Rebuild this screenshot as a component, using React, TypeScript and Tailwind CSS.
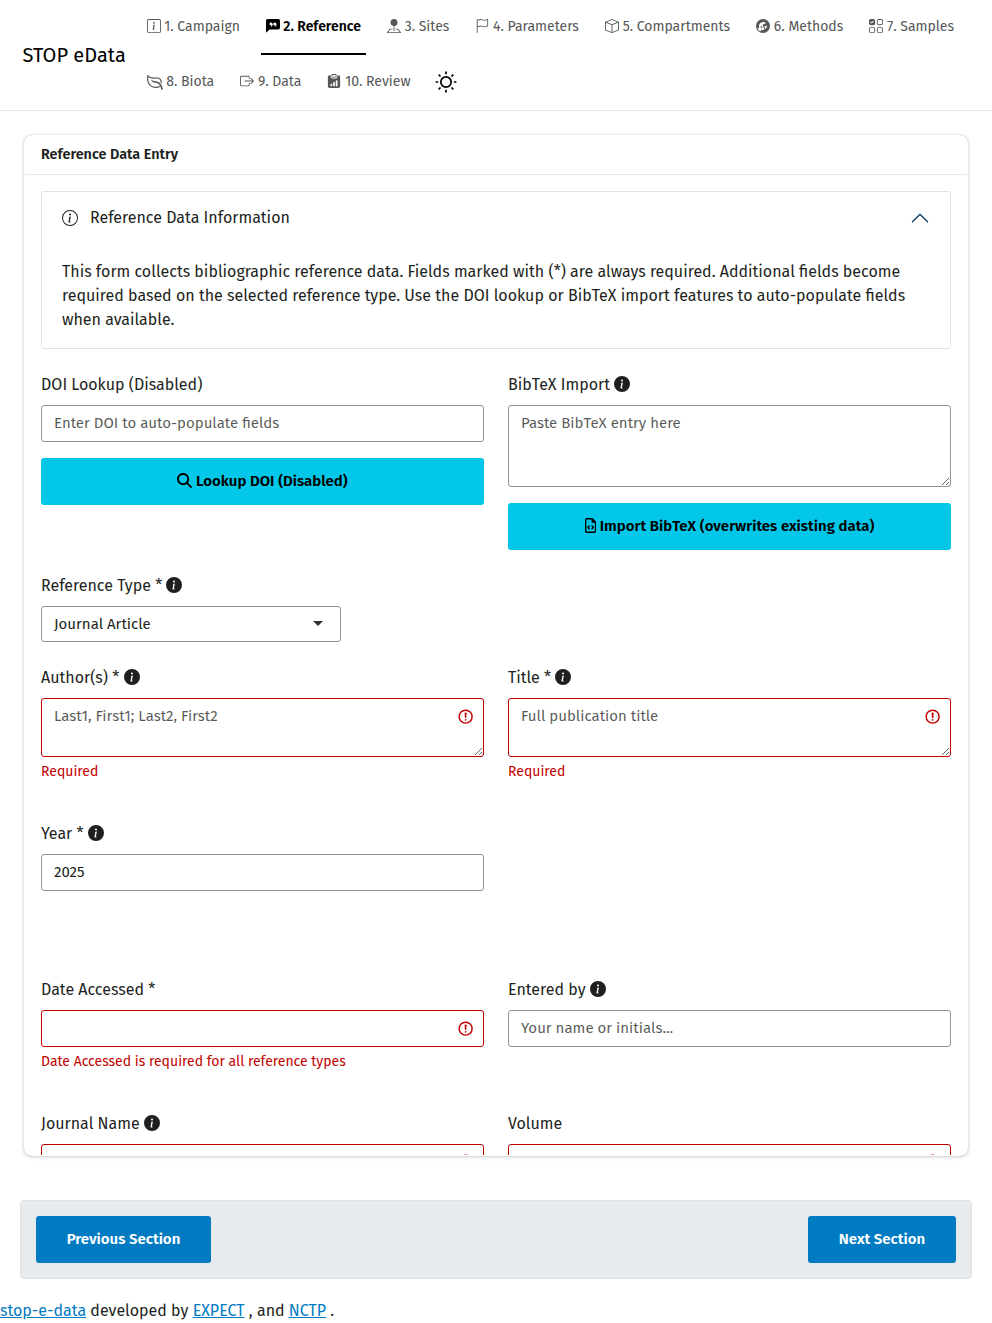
import type { InputHTMLAttributes, ReactNode } from "react";
import {
  BsBox,
  BsBoxArrowRight,
  BsChatLeftQuoteFill,
  BsClipboardDataFill,
  BsFlag,
  BsInfoCircle,
  BsInfoCircleFill,
  BsInfoSquare,
  BsPinMapFill,
  BsUiChecksGrid,
  BsWrenchAdjustableCircleFill,
} from "react-icons/bs";
import { FaMagnifyingGlass, FaRegFileCode } from "react-icons/fa6";

function LeafIcon({ className }: { className?: string }) {
  return (
    <svg viewBox="0 0 16 16" fill="none" stroke="currentColor" strokeWidth="1.2" className={className}>
      <path strokeLinejoin="round" d="M14.2 9.2C14.6 6.2 13 3.7 9 4 5.5 4.3 2.3 3.9.9 1.6.3 5 .8 9.4 3.8 11.9 6.5 14 11 13.8 12.8 12.2" />
      <path
        stroke="none"
        fill="currentColor"
        d="M4 5.5C6 7.4 9 7 11 7.7 14 8.8 15.400 12 15.900 15.200L14.400 15.900C13.900 13 12.800 10.300 10.800 9.400 8.500 8.500 4.800 9.200 4 5.500Z"
      />
    </svg>
  );
}

function SunIcon() {
  return (
    <svg viewBox="0 0 22 22" fill="none" stroke="currentColor" strokeWidth="1.7" className="size-[22px]">
      <circle cx="11" cy="11" r="5.2" />
      <path d="M11 .6v2.6M11 18.8v2.6M.6 11h2.6M18.8 11h2.6M3.7 3.7l1.8 1.8M16.5 16.5l1.8 1.8M3.7 18.3l1.8-1.8M16.5 5.5l1.8-1.8" />
    </svg>
  );
}

function InvalidIcon({ className }: { className: string }) {
  return (
    <svg
      viewBox="0 0 12 12"
      fill="none"
      stroke="#c10000"
      className={`pointer-events-none absolute right-[9.8px] size-[17.25px] ${className}`}
    >
      <circle cx="6" cy="6" r="4.5" />
      <path strokeLinejoin="round" d="M5.8 3.6h.4L6 6.5z" />
      <circle cx="6" cy="8.2" r=".6" fill="#c10000" stroke="none" />
    </svg>
  );
}

const icon = "inline-block size-[14px] align-[-2px]";

function NavItem({ glyph, children, active }: { glyph: ReactNode; children: ReactNode; active?: boolean }) {
  return (
    <li
      className={
        active
          ? "h-[55px] whitespace-nowrap border-b-2 border-black px-[5px] pt-4 font-semibold text-black"
          : "h-[55px] whitespace-nowrap border-b-2 border-transparent px-[5px] pt-4 text-[#565758]"
      }
    >
      {glyph} {children}
    </li>
  );
}

function Label({ children, info }: { children: ReactNode; info?: boolean }) {
  return (
    <label className="mb-2 block h-[25px] pt-px">
      {children}
      {info && (
        <>
          {" "}
          <BsInfoCircleFill className="inline-block size-4 align-[-2px]" />
        </>
      )}
    </label>
  );
}

const field =
  "block w-full rounded-[3px] border px-3 text-[15px] leading-[22.5px] outline-none placeholder:text-[#1d1f21]/75";
const normal = "border-[#8d959e]";
const invalid = "border-[#c10000]";

function Input({
  bad,
  iconClass = "top-[9.5px]",
  ...rest
}: InputHTMLAttributes<HTMLInputElement> & { bad?: boolean; iconClass?: string }) {
  return (
    <div className="relative">
      <input className={`${field} h-[37px] pb-[7px] pt-[5px] ${bad ? invalid : normal}`} {...rest} />
      {bad && <InvalidIcon className={iconClass} />}
    </div>
  );
}

function Area({ size, bad, placeholder }: { size: string; bad?: boolean; placeholder: string }) {
  return (
    <div className="relative">
      <textarea className={`${field} resize-y py-[6px] ${size} ${bad ? invalid : normal}`} placeholder={placeholder} />
      {bad && <InvalidIcon className="top-[9.9px]" />}
    </div>
  );
}

function Feedback({ children }: { children: ReactNode }) {
  return <div className="mt-1 text-[14px] leading-[21px] text-[#c10000]">{children}</div>;
}

const cyan =
  "mt-4 block h-[47px] w-full rounded-[3px] bg-[#03c7e8] text-center text-[15px] font-semibold leading-[22.5px] text-black";
const blue = "h-[47px] rounded-[3px] bg-[#007bc2] text-[15px] font-semibold text-white";

export default function App() {
  return (
    <div className="min-h-[1323px] bg-white font-['Fira_Sans','Noto_Sans',sans-serif] text-base text-[#1d1f21]">
      <nav className="flex h-[111px] items-center border-b border-[#e8e9ea] pl-[22.5px]">
        <a className="w-[119px] shrink-0 whitespace-nowrap text-[20px] leading-[30px] text-black">STOP eData</a>
        <ul className="flex grow flex-wrap gap-x-4 pr-4 text-[14px] leading-[21px]">
          <NavItem glyph={<BsInfoSquare className={icon} />}>1. Campaign</NavItem>
          <NavItem active glyph={<BsChatLeftQuoteFill className={icon} />}>2. Reference</NavItem>
          <NavItem glyph={<BsPinMapFill className={icon} />}>3. Sites</NavItem>
          <NavItem glyph={<BsFlag className={icon} />}>4. Parameters</NavItem>
          <NavItem glyph={<BsBox className={icon} />}>5. Compartments</NavItem>
          <NavItem glyph={<BsWrenchAdjustableCircleFill className={icon} />}>6. Methods</NavItem>
          <NavItem glyph={<BsUiChecksGrid className={icon} />}>7. Samples</NavItem>
          <NavItem glyph={<LeafIcon className="inline-block size-4 align-[-4px]" />}>8. Biota</NavItem>
          <NavItem glyph={<BsBoxArrowRight className={icon} />}>9. Data</NavItem>
          <NavItem glyph={<BsClipboardDataFill className={icon} />}>10. Review</NavItem>
          <li className="flex h-[55px] items-center pb-[2px] pl-1 text-black">
            <SunIcon />
          </li>
        </ul>
      </nav>

      <main className="mx-6 mt-6 flex h-[1021px] flex-col overflow-hidden rounded-[8px] border border-transparent shadow-[0_0_1px_rgba(0,0,0,0.3),0_1px_4px_rgba(0,0,0,0.18)]">
        <header className="mt-[-1px] h-10 shrink-0 border-b border-[#e8e9ea] px-4 pt-[9px] text-[14.4px] font-semibold leading-[21px]">
          Reference Data Entry
        </header>
        <div className="grow overflow-hidden px-4 pt-4">
          <section className="h-[158px] rounded-[3px] border border-[#dee2e6]">
            <div className="flex h-[52px] items-center px-5">
              <BsInfoCircle className="size-4" />
              <span className="ml-3 grow">Reference Data Information</span>
              <svg viewBox="0 0 16 16" fill="none" stroke="#0a3a5a" strokeLinecap="round" strokeLinejoin="round" className="size-5">
                <path d="m2 11 6-6 6 6" />
              </svg>
            </div>
            <p className="px-5 pt-4 leading-6">
              This form collects bibliographic reference data. Fields marked with (*) are always required. Additional
              fields become required based on the selected reference type. Use the DOI lookup or BibTeX import features
              to auto-populate fields when available.
            </p>
          </section>

          <div className="mt-[23px] grid h-[201px] grid-cols-2 gap-6">
            <div>
              <Label>DOI Lookup (Disabled)</Label>
              <Input placeholder="Enter DOI to auto-populate fields" />
              <button className={cyan}>
                <FaMagnifyingGlass className="inline-block size-[15px] align-[-2px]" /> Lookup DOI (Disabled)
              </button>
            </div>
            <div>
              <Label info>BibTeX Import</Label>
              <Area size="h-[82px]" placeholder="Paste BibTeX entry here" />
              <button className={cyan}>
                <FaRegFileCode className="inline-block h-[15px] w-[11.25px] align-[-2px]" /> Import BibTeX (overwrites
                existing data)
              </button>
            </div>
          </div>

          <div className="h-[92px]">
            <Label info>Reference Type *</Label>
            <div className="flex h-9 w-[300px] items-center justify-between rounded-[3px] border border-[#8d959e] pl-3 pr-[17px] text-[15px]">
              Journal Article
              <span className="mb-px border-x-[5px] border-t-[5px] border-x-transparent border-t-[#303030]" />
            </div>
          </div>

          <div className="grid h-[156px] grid-cols-2 gap-6">
            <div>
              <Label info>Author(s) *</Label>
              <Area bad size="h-[59px]" placeholder="Last1, First1; Last2, First2" />
              <Feedback>Required</Feedback>
            </div>
            <div>
              <Label info>Title *</Label>
              <Area bad size="h-[59px]" placeholder="Full publication title" />
              <Feedback>Required</Feedback>
            </div>
          </div>

          <div className="grid h-[156px] grid-cols-2 gap-6">
            <div>
              <Label info>Year *</Label>
              <Input defaultValue="2025" />
            </div>
          </div>

          <div className="grid h-[134px] grid-cols-2 gap-6">
            <div>
              <Label>Date Accessed *</Label>
              <Input bad />
              <Feedback>Date Accessed is required for all reference types</Feedback>
            </div>
            <div>
              <Label info>Entered by</Label>
              <Input placeholder="Your name or initials..." />
            </div>
          </div>

          <div className="grid grid-cols-2 gap-6">
            <div>
              <Label info>Journal Name</Label>
              <Input bad iconClass="top-[8.8px]" />
            </div>
            <div>
              <Label>Volume</Label>
              <Input bad iconClass="top-[8.8px]" />
            </div>
          </div>
        </div>
      </main>

      <div className="mx-5 mt-11 flex h-[79px] items-center justify-between rounded-[4px] border border-[#dee2e6] bg-[#e8ebee] px-[15px]">
        <button className={`${blue} w-[175px]`}>Previous Section</button>
        <button className={`${blue} w-[148px]`}>Next Section</button>
      </div>

      <footer className="mt-5 h-6 leading-6">
        <a className="text-[#007bc2] underline">stop-e-data</a> developed by{" "}
        <a className="text-[#007bc2] underline">EXPECT</a> , and <a className="text-[#007bc2] underline">NCTP</a> .
      </footer>
    </div>
  );
}
